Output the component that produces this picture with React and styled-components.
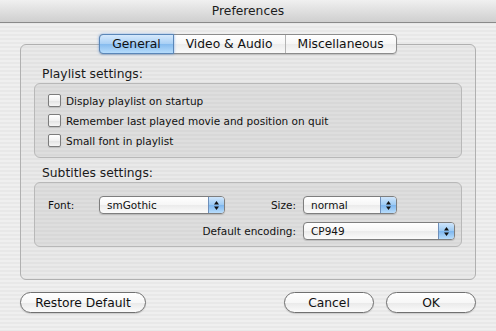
import styled, { createGlobalStyle } from "styled-components";

const GlobalStyle = createGlobalStyle`
  * { box-sizing: border-box; }
  body {
    margin: 0;
    font-family: "DejaVu Sans", "Lucida Grande", sans-serif;
    color: #111;
  }
`;

const App = () => {
  return (
    <Window>
      <GlobalStyle />
      <TitleBar>Preferences</TitleBar>
      <Body>
        <TabView>
          <Tabs>
            <Tab $active>General</Tab>
            <Tab>Video &amp; Audio</Tab>
            <Tab>Miscellaneous</Tab>
          </Tabs>
          <TabBox>
            <GroupLabel>Playlist settings:</GroupLabel>
            <Group>
              <Check label="Display playlist on startup" />
              <Check label="Remember last played movie and position on quit" />
              <Check label="Small font in playlist" />
            </Group>
            <GroupLabel>Subtitles settings:</GroupLabel>
            <SubGroup>
              <Label $width={51}>Font:</Label>
              <PopupButton value="smGothic" width={126} />
              <Label $right $width={78}>Size:</Label>
              <PopupButton value="normal" width={94} />
              <Label $right $span>Default encoding:</Label>
              <PopupButton value="CP949" width={152} />
            </SubGroup>
          </TabBox>
        </TabView>
        <ButtonRow>
          <Button $width={126}>Restore Default</Button>
          <Spacer />
          <Button $width={90}>Cancel</Button>
          <Button $width={90}>OK</Button>
        </ButtonRow>
      </Body>
    </Window>
  );
};

const Check = ({ label }) => (
  <CheckRow>
    <Box />
    <span>{label}</span>
  </CheckRow>
);

const PopupButton = ({ value, width }) => (
  <Popup $width={width}>
    <PopupText>{value}</PopupText>
    <Arrows>
      <svg width="7" height="11" viewBox="0 0 7 11">
        <path d="M3.5 1 L6 4.5 L1 4.5 Z" fill="#111" />
        <path d="M3.5 10 L6 6.5 L1 6.5 Z" fill="#111" />
      </svg>
    </Arrows>
  </Popup>
);

export default App;

const Window = styled.div`
  width: 496px;
  height: 331px;
  overflow: hidden;
  background: repeating-linear-gradient(
    to bottom,
    #efefef 0px,
    #efefef 2px,
    #e8e8e8 2px,
    #e8e8e8 4px
  );
`;

const TitleBar = styled.div`
  height: 23px;
  display: flex;
  align-items: center;
  justify-content: center;
  font-size: 12.3px;
  color: #1c1c1c;
  background: linear-gradient(#f0f0f0, #dcdcdc 60%, #cfcfcf);
  border-bottom: 1px solid #8a8a8a;
`;

const Body = styled.div`
  padding: 11px 20px 0;
`;

const TabView = styled.div`
  display: flex;
  flex-direction: column;
  align-items: center;
`;

const Tabs = styled.div`
  display: flex;
  height: 20px;
  margin-bottom: -10px;
  position: relative;
  z-index: 1;
  border: 1px solid #8c8c8c;
  border-radius: 4px;
  box-shadow: 0 1px 1px rgba(0, 0, 0, 0.15);
  background: linear-gradient(#ffffff, #f6f6f6 50%, #ececec 51%, #fafafa);
`;

const Tab = styled.div`
  display: flex;
  align-items: center;
  justify-content: center;
  font-size: 12.3px;
  padding: 0 12px;
  color: #111;
  border-right: 1px solid #b4b4b4;
  &:last-child {
    border-right: none;
  }
  ${({ $active }) =>
    $active &&
    `
    margin: -1px 0 -1px -1px;
    border: 1px solid #5a86b8;
    border-radius: 4px 0 0 4px;
    background: linear-gradient(#d6e9fc, #a8cff4 50%, #86bbee 51%, #b6dcfb);
    box-shadow: 0 0 3px rgba(60, 130, 220, 0.6);
  `}
`;

const TabBox = styled.div`
  align-self: stretch;
  height: 236px;
  padding: 19px 13px 0;
  border: 1px solid #b0b0b0;
  border-radius: 6px;
  background: rgba(0, 0, 0, 0.025);
`;

const GroupLabel = styled.div`
  font-size: 12.3px;
  padding: 3px 0 2px 8px;
  color: #1a1a1a;
`;

const Group = styled.div`
  display: flex;
  flex-direction: column;
  gap: 5px;
  height: 75px;
  padding: 9px 13px 0;
  margin-bottom: 5px;
  border: 1px solid #b8b8b8;
  border-radius: 6px;
  background: rgba(0, 0, 0, 0.045);
`;

const SubGroup = styled.div`
  display: grid;
  grid-template-columns: auto auto auto auto;
  grid-auto-rows: 18px;
  justify-content: start;
  align-items: center;
  row-gap: 8px;
  height: 65px;
  padding: 13px 13px 0;
  border: 1px solid #b8b8b8;
  border-radius: 6px;
  background: rgba(0, 0, 0, 0.045);
`;

const Label = styled.div`
  font-size: 10.5px;
  width: ${({ $width }) => ($width ? `${$width}px` : "auto")};
  padding-right: ${({ $right }) => ($right ? "7px" : "0")};
  text-align: ${({ $right }) => ($right ? "right" : "left")};
  grid-column: ${({ $span }) => ($span ? "1 / 4" : "auto")};
`;

const CheckRow = styled.label`
  display: flex;
  align-items: center;
  gap: 5px;
  height: 15px;
  font-size: 10.5px;
`;

const Box = styled.span`
  width: 13px;
  height: 13px;
  border: 1px solid #7c7c7c;
  border-radius: 2px;
  background: linear-gradient(#ffffff, #f2f2f2 50%, #e2e2e2 51%, #f6f6f6);
  box-shadow: 0 1px 1px rgba(0, 0, 0, 0.12);
`;

const Popup = styled.div`
  display: flex;
  width: ${({ $width }) => $width}px;
  height: 18px;
  border: 1px solid #7e7e7e;
  border-radius: 4px;
  overflow: hidden;
  box-shadow: 0 1px 1px rgba(0, 0, 0, 0.15);
  background: linear-gradient(#ffffff, #f6f6f6 50%, #ebebeb 51%, #fbfbfb);
`;

const PopupText = styled.div`
  flex: 1;
  display: flex;
  align-items: center;
  padding-left: 7px;
  font-size: 10.5px;
`;

const Arrows = styled.div`
  width: 16px;
  display: flex;
  align-items: center;
  justify-content: center;
  border-left: 1px solid #6e8fba;
  background: linear-gradient(#cfe5fb, #9ccaf3 50%, #7db6ee 51%, #b9ddfb);
`;

const ButtonRow = styled.div`
  display: flex;
  gap: 12px;
  margin-top: 12px;
`;

const Spacer = styled.div`
  flex: 1;
`;

const Button = styled.div`
  width: ${({ $width }) => $width}px;
  height: 21px;
  display: flex;
  align-items: center;
  justify-content: center;
  font-size: 12.3px;
  border: 1px solid #707070;
  border-radius: 11px;
  box-shadow: 0 1px 1px rgba(0, 0, 0, 0.15);
  background: linear-gradient(#ffffff, #f7f7f7 50%, #e9e9e9 51%, #fbfbfb);
`;
